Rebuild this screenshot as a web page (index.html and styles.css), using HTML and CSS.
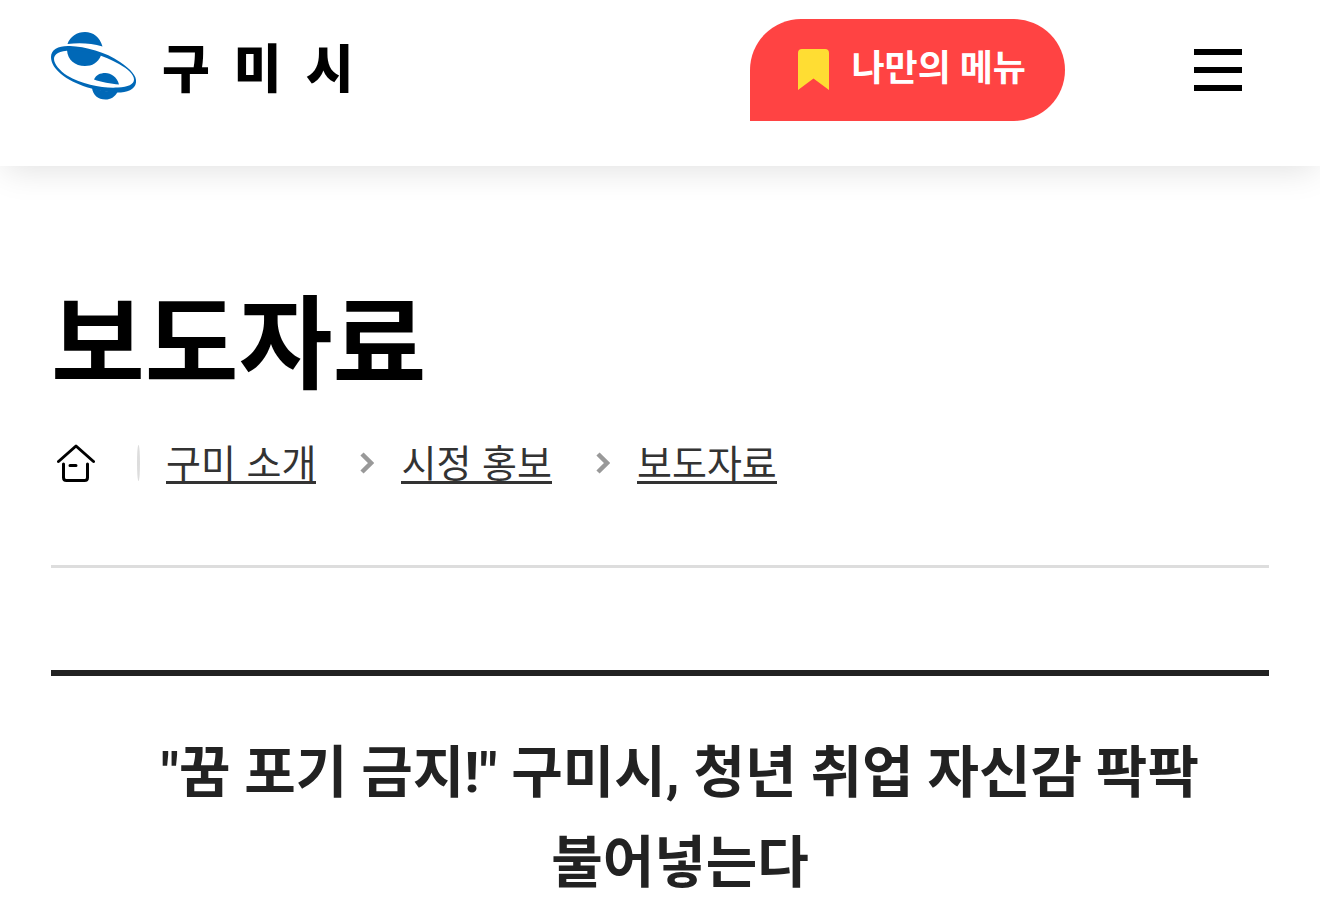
FILE: index.html
```html
<!DOCTYPE html>
<html lang="ko">
<head>
<meta charset="utf-8">
<meta name="viewport" content="width=device-width, initial-scale=1">
<title>보도자료 - 구미시</title>
<link rel="stylesheet" href="styles.css">
</head>
<body>
<header class="header">
  <a class="logo" href="#" aria-label="구미시">
    <svg class="logo-mark" viewBox="0 0 86 68" aria-hidden="true">
      <g fill="#0068b7">
        <path d="M16.500 12C19 4.500 26 0 34 0s15 5 17.500 14.500C40 11 28 10.500 16.500 12z"/>
        <path d="M16 18c6-3 22-3 34 5.500C47 31 41 34 34 34c-10 0-17.500-6-18-16z"/>
        <path d="M43 47.500C45 43 49 41 54.500 41S66 45 68 52.500C60 52 50 50 43 47.500z"/>
        <path d="M41 56c8 2.500 17 4 25.500 4C64 65 59.500 67.500 54.500 67.500 47 67.500 42 63 41 56z"/>
        <path fill-rule="evenodd" d="M0 25C0 17 8 13.500 19 14c15 .5 36 6 50 16 11 7.500 17 14 16 20.500C84 58 75 61 64 60.500 48 60 23 53 10 42 4 37 0 31 0 25zm3 2c0 5 6 12 13 16.500C32 53 53 56.500 67 55.500c10-.5 16-3 16-8 0-5-6-10.500-15-15.500C52 23 35 18 20 18.500 8 19 3 22 3 27z"/>
      </g>
    </svg>
    <span class="logo-name"><span>구</span><span>미</span><span>시</span></span>
  </a>
  <div class="header-tools">
    <button class="my-menu" type="button">
      <svg class="bookmark" viewBox="0 0 31 41" aria-hidden="true"><path fill="#ffdd33" d="M4 0h23a4 4 0 0 1 4 4v37L15.500 29.500 0 41V4a4 4 0 0 1 4-4z"/></svg>
      <span>나만의 메뉴</span>
    </button>
    <button class="menu-toggle" type="button" aria-label="전체 메뉴">
      <span class="bar"></span><span class="bar"></span><span class="bar"></span>
    </button>
  </div>
</header>
<main class="content">
  <h1 class="page-title">보도자료</h1>
  <nav class="breadcrumb" aria-label="현재 위치">
    <a class="home" href="#" aria-label="홈">
      <svg class="home-icon" viewBox="0 0 38 38" fill="none" stroke="#000" stroke-width="3" stroke-linecap="round" stroke-linejoin="round" aria-hidden="true"><path d="M1.500 17.500 19 2l17.500 15.500M6.500 20v13.500q0 3 3 3h18q3 0 3-3V20M13 21.500h6"/></svg>
    </a>
    <span class="divider"></span>
    <a class="crumb" href="#">구미 소개</a>
    <svg class="chevron" viewBox="0 0 14 22" aria-hidden="true"><path d="M2 2l9 9-9 9" fill="none" stroke="#999" stroke-width="4.500"/></svg>
    <a class="crumb" href="#">시정 홍보</a>
    <svg class="chevron" viewBox="0 0 14 22" aria-hidden="true"><path d="M2 2l9 9-9 9" fill="none" stroke="#999" stroke-width="4.500"/></svg>
    <a class="crumb" href="#">보도자료</a>
  </nav>
  <article class="article">
    <h2 class="article-title">"꿈 포기 금지!" 구미시, 청년 취업 자신감 팍팍 불어넣는다</h2>
  </article>
</main>
</body>
</html>
```
FILE: styles.css
```css
* {
  box-sizing: border-box;
}

body {
  margin: 0;
  background: #fff;
  color: #222;
  font-family: "Noto Sans CJK KR", "Noto Sans", sans-serif;
}

button {
  margin: 0;
  border: 0;
  font: inherit;
  cursor: pointer;
}

.header {
  display: flex;
  justify-content: space-between;
  align-items: flex-start;
  padding: 19px 78px 45px 51px;
  background: #fff;
  box-shadow: 0 8px 32px -4px rgba(0, 0, 0, 0.12);
}

.logo {
  display: flex;
  align-items: center;
  gap: 25px;
  padding-top: 13px;
  color: #000;
  text-decoration: none;
}

.logo-mark {
  width: 86px;
  height: 68px;
}

.logo-name {
  display: flex;
  gap: 24px;
  font-size: 52px;
  font-weight: 900;
  line-height: 68px;
}

.header-tools {
  display: flex;
  align-items: center;
  gap: 129px;
}

.my-menu {
  display: flex;
  align-items: center;
  gap: 22px;
  height: 102px;
  padding: 0 39px 2px 48px;
  border-radius: 51px 51px 51px 0;
  background: #ff4343;
  color: #fff;
  font-family: Roboto, "Noto Sans CJK KR", sans-serif;
  font-size: 36px;
  font-weight: 700;
  line-height: 48px;
}

.bookmark {
  width: 31px;
  height: 41px;
}

.menu-toggle {
  display: flex;
  flex-direction: column;
  gap: 12px;
  width: 48px;
  padding: 0;
  background: none;
}

.bar {
  height: 6px;
  background: #000;
}

.content {
  padding: 0 51px;
}

.page-title {
  margin: 0;
  padding-top: 97px;
  color: #000;
  font-size: 102px;
  font-weight: 700;
  line-height: 148px;
}

.breadcrumb {
  display: flex;
  align-items: center;
  padding: 30px 0 81px;
  border-bottom: 3px solid #ddd;
}

.home {
  display: flex;
  padding: 0 6px;
}

.home-icon {
  width: 38px;
  height: 38px;
}

.divider {
  width: 3px;
  height: 36px;
  margin: 0 26px 0 36px;
  border-radius: 50%;
  background: #ddd;
}

.crumb {
  border-bottom: 3px solid #333;
  color: #333;
  font-size: 38px;
  line-height: 40px;
  text-decoration: none;
}

.chevron {
  width: 14px;
  height: 22px;
  margin: 0 27px 0 44px;
}

.article {
  margin-top: 102px;
  padding: 52px 0 0 40px;
  border-top: 6px solid #222;
}

.article-title {
  margin: 0;
  font-family: Roboto, "Noto Sans CJK KR", sans-serif;
  font-size: 56px;
  font-weight: 700;
  line-height: 90px;
  text-align: center;
  word-break: keep-all;
}
```
